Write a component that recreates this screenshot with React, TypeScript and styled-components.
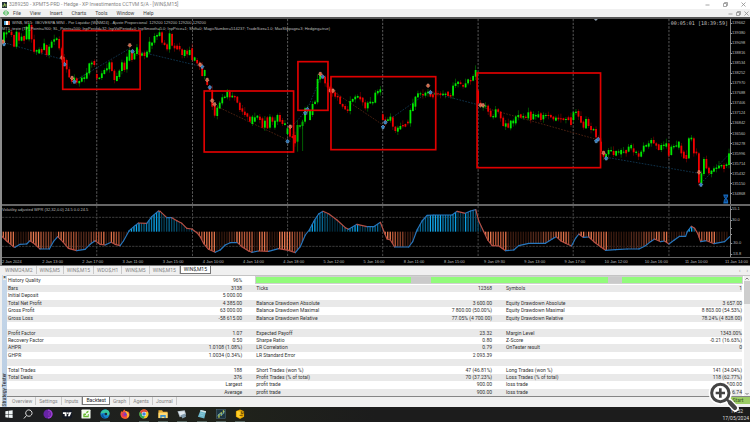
import React from "react";
import styled, { createGlobalStyle, css } from "styled-components";

const GlobalStyle = createGlobalStyle`
  * { box-sizing: border-box; }
  html, body, #root { height: 100%; }
  body { margin: 0; overflow: hidden; background: #f0f0f0; font: 5px/7px Roboto, "Open Sans", sans-serif; color: #333; }
  button { border: 0; margin: 0; padding: 0; background: none; font: inherit; color: inherit; white-space: nowrap; }
`;

const Page = styled.div`
  display: flex;
  flex-direction: column;
  height: 100vh;
  min-height: 400px;
  position: relative;
`;

const TitleBar = styled.header`
  display: flex;
  align-items: center;
  gap: 2px;
  height: 9px;
  padding: 0 4px 0 2px;
  background: #fff;
  color: #858585;
`;
const Title = styled.h1`
  flex: 1;
  margin: 0;
  font-size: 5px;
  font-weight: 400;
`;
const WindowButtons = styled.div<{ $gap: number }>`
  display: flex;
  align-items: center;
  gap: ${(p) => p.$gap}px;
  button { display: flex; width: 5px; height: 5px; }
  svg { width: 5px; height: 5px; }
`;
const MenuBar = styled.nav`
  display: flex;
  align-items: center;
  height: 8px;
  padding: 0 1px 0 3px;
  color: #444;
`;
const MenuItems = styled.div`
  display: flex;
  flex: 1;
  gap: 9px;
  padding-left: 4px;
`;

const ChartWindow = styled.main`
  display: flex;
  flex-direction: column;
  flex: 1;
  min-height: 0;
  border-top: 2px solid #565656;
  border-left: 2px solid #8c8c8c;
  border-bottom: 1px solid #777;
  background: #000;
  color: #bdbdbd;
  font: 4px/6px "Liberation Sans", Arial, sans-serif;
`;
const Pane = styled.section<{ $grow: number }>`
  display: flex;
  flex: ${(p) => p.$grow} 1 0;
  min-height: 0;
  position: relative;
`;
const Plot = styled.svg`
  flex: 1;
  min-width: 0;
  height: 100%;
  display: block;
`;
const Divider = styled.div`
  height: 2px;
  background: #666;
`;
const Scale = styled.div<{ $short?: boolean }>`
  display: flex;
  flex-direction: column;
  justify-content: space-between;
  width: 20px;
  border-left: 1px solid #888;
  padding: ${(p) => (p.$short ? "0" : "1px 0 7px")};
`;
const Price = styled.span`
  display: flex;
  align-items: center;
  &::before { content: ""; width: 1px; height: 1px; background: #999; }
`;
const ChartCaption = styled.div`
  position: absolute;
  top: 1px;
  left: 0;
  white-space: nowrap;
`;
const CaptionLine = styled.p<{ $indent?: boolean }>`
  display: flex;
  align-items: center;
  gap: 2px;
  margin: 0;
  padding-left: ${(p) => (p.$indent ? 2 : 0)}px;
`;
const Flag = styled.i`
  width: 6px;
  height: 4px;
  background: linear-gradient(90deg, #4fa8dc 0 33%, #fff 33% 66%, #e4683e 66%);
`;
const Countdown = styled.time`
  position: absolute;
  top: 1px;
  right: 22px;
  font: 5px/7px "DejaVu Sans Mono", monospace;
  color: #c4c4c4;
`;
const TimeAxis = styled.div`
  display: flex;
  height: 8px;
  padding-top: 1px;
  border-top: 1px solid #666;
`;
const TimeLabel = styled.span`
  flex: 1 1 0;
  min-width: 0;
  white-space: nowrap;
  &:last-child { flex: 0 0 25px; }
`;

const ChartTabs = styled.nav`
  display: flex;
  align-items: stretch;
  height: 9px;
  padding: 0 2px 1px;
  background: #f0f0f0;
  color: #858585;
`;
const activeTab = css`
  background: #fff;
  border: 1px solid #777;
  border-top: 0;
  color: #222;
`;
const ChartTab = styled.button<{ $active?: boolean }>`
  padding: 0 3px;
  line-height: 7px;
  border-right: 1px solid #c9c9c9;
  ${(p) => p.$active && activeTab}
`;
const Pager = styled.div`
  display: flex;
  gap: 6px;
  margin-left: auto;
`;

const Tester = styled.section`
  display: flex;
  height: 132px;
  padding-left: 2px;
`;
const SideStrip = styled.aside`
  display: flex;
  flex-direction: column;
  align-items: center;
  justify-content: space-between;
  width: 5px;
  background: linear-gradient(#c7d8ea, #b8cce2);
  button { line-height: 5px; font-weight: 700; background: #eee; }
`;
const SideTitle = styled.h2`
  margin: 0 0 1px;
  writing-mode: vertical-rl;
  rotate: 180deg;
  font-size: 5px;
  line-height: 5px;
  font-weight: 400;
  color: #222;
`;
const TesterBody = styled.div`
  display: flex;
  flex-direction: column;
  flex: 1;
  min-width: 0;
`;
const ReportArea = styled.div`
  display: flex;
  flex: 1;
  min-height: 0;
  border-top: 1px solid #c4c4c4;
  border-bottom: 1px solid #858585;
  background: #fff;
`;
const Report = styled.table`
  flex: 1;
  width: 100%;
  min-width: 0;
  height: 120px;
  border-collapse: collapse;
  table-layout: fixed;
  tr:nth-child(even) { background: #e9e9e9; }
  th, td { padding: 0; line-height: 5px; white-space: nowrap; }
  th { text-align: left; font-weight: 400; padding-left: 14px; }
  th:first-child { padding-left: 1px; }
  td { text-align: right; }
`;
const Column = styled.col<{ $share: number }>`
  width: ${(p) => p.$share}%;
`;
const QualityBar = styled.div`
  display: flex;
  height: 6px;
  margin-left: 14px;
  outline: 1px solid #d0d0d0;
`;
const Quality = styled.i<{ $share: number; $missing?: boolean }>`
  flex: ${(p) => p.$share} 1 0;
  background: ${(p) => (p.$missing ? "#cacaca" : "#92fb7b")};
`;
const Scroller = styled.div`
  display: flex;
  flex-direction: column;
  justify-content: space-between;
  align-items: center;
  flex: 0 0 6px;
  margin-left: 2px;
  background: #f0f0f0;
  svg { width: 4px; height: 5px; }
`;
const Thumb = styled.div`
  width: 100%;
  height: 23px;
  margin-bottom: auto;
  background: #cdcdcd;
`;
const TesterTabs = styled.nav`
  display: flex;
  height: 10px;
  padding-left: 2px;
  color: #858585;
`;
const TesterTab = styled.button<{ $active?: boolean }>`
  height: 8px;
  padding: 0 3px;
  line-height: 7px;
  border-right: 1px solid #c9c9c9;
  ${(p) => p.$active && activeTab}
`;
const StartButton = styled.button`
  width: 24px;
  height: 7px;
  margin-left: auto;
  line-height: 7px;
  background: #9ccc65;
  color: #35521b;
`;

const Taskbar = styled.footer`
  display: flex;
  align-items: center;
  justify-content: space-between;
  height: 15px;
  padding: 0 1px 0 4px;
  background: linear-gradient(90deg, #1d1e21, #20231b 30%, #1c1c1c 50%);
  color: #ddd;
`;
const TaskList = styled.div`
  display: flex;
  justify-content: space-between;
  width: 241px;
`;
const TaskButton = styled.button<{ $open?: boolean }>`
  display: flex;
  flex: 0 0 10px;
  height: 15px;
  align-items: center;
  border-bottom: 1px solid ${(p) => (p.$open ? "#55645f" : "transparent")};
  svg { width: 10px; height: 10px; }
`;
const Clock = styled.time`
  text-align: right;
  span { display: block; }
  span:first-child { padding-right: 6px; }
`;
const Magnifier = styled.button`
  position: absolute;
  right: 10px;
  bottom: 9px;
  width: 32px;
  height: 32px;
  svg { display: block; width: 32px; height: 32px; }
`;

const STEP = 7.53;
const RIGHT = 2188;

/* Candles, oldest first: body top, body bottom, and direction. */
const CANDLES = `
97-132g 97-103g 92-97g 95-105r 105-140r 95-140g 97-122r 110-122g 108-122r 80-118g 73-118g 75-118r 118-155r 150-155g 148-160g
147-158r 130-150g 135-165r 140-165g 125-143g 118-125g 115-120g 117-145r 145-178r 172-190r 180-208r 208-232r 235-245r 233-243g 235-248r
243-250g 233-245g 232-237g 218-236g 190-220g 188-193g 183-195r
222-235r 233-237g 220-234g 210-222g 205-211g 187-208g 187-213r 212-240r 228-243g 212-231g 187-213g 188-210r 170-208g 150-182g
152-180r 160-178g 142-162g 148-165r 160-167g 158-168r 155-172g 125-157g 128-137g 108-128g 105-110g 97-108g 97-128r 128-135r 133-148r
100-148g 102-137r 137-145r 137-148r 138-148r 148-165r 150-168g 152-163r 150-165g
145-180r 172-182g 180-190r 188-200r 200-228r 210-228g 240-255r 262-270r 270-320r 318-347r 323-348g 308-325g 292-310g 290-294g
275-292g 275-292r 287-292g 288-292r 290-308r 308-330r 325-335r 335-345r 340-350r 350-365r 350-372g 352-365g 347-353g 350-360r
355-383r 362-383g 352-385r 350-383g 352-365r 362-383g 345-365g 345-365r 360-372r 370-375g
385-402g 380-410r 408-414r 405-430r 375-425g 376-380g 365-378g 325-365g 330-334g 330-360g 312-345g 305-312g 237-307g 225-238g
228-234r 230-250r 248-262r 260-275r 270-280r 277-290r 288-292r 290-312r 312-320r 318-328r 328-333r 303-333g 297-305g 290-298g
288-293g 290-298r 293-307r 307-325r 308-325g 305-310g 306-310g 278-308g 273-280g 268-277g
343-360r 358-368r 358-363g 350-362g 352-380r 380-393r 383-395g 378-388g 375-379r 372-380r 365-370r 330-370g 310-333g 290-320g
280-292g 280-283g 282-286r 278-287g 275-280g 275-290r 283-292r 278-285g 280-283r 280-285r 281-285g 281-285g 275-288r 285-290r
257-287g 250-258g 245-252g 247-252r 255-260r 250-262g 238-250g 240-244r 228-242g 210-230g
272-310r 308-315r 315-322g 317-320g 317-335r 332-350r 348-352g 328-352g 328-335r 335-355r 353-378r 370-380g 370-383r 362-385g
362-370g 350-370g 345-351g 343-353r 348-353g 350-354r 337-355g 335-360r 342-358g 345-349g 343-352g 340-360r 345-358g 345-348g
345-348r 345-352r 350-358r 353-362g 353-358r 355-358r 355-360r 357-360g 352-360r 352-375r
337-360g 335-339g 333-350r 348-368r 365-383r 357-385g 357-378r 378-390r 387-391g 387-412r 412-420r 425-455r 455-470r 462-475g
450-463g 450-454g 453-465r 453-467g 454-458g 450-463g 455-458g 450-460r 440-455g 435-445g 445-457r 455-459g 460-470r 455-470g
437-455g 435-440g 430-440g 420-430g 420-430r 430-437r 433-450r 435-450g 434-438g 430-440g
430-467r 440-465g 438-442g 436-440g 425-443g 437-460r 455-475r 465-477r 415-475g 413-418g 415-460r 455-460r 460-548r 520-550g
477-522g 477-505r 503-520r 512-522g 505-515g 503-507g 497-505g 495-499g 495-507r 493-498g 460-495g
`
  .trim()
  .split(/\s+/)
  .map((text, i, all) => {
    const [top, rest] = text.split("-");
    const bottom = parseInt(rest, 10);
    return {
      x: 12 + (i * (2185 - 12)) / (all.length - 1),
      top: Number(top),
      bottom,
      up: rest.endsWith("g"),
      reach: [4, 10, 6, 2, 14, 5, 8][(i * 5 + (i % 3)) % 7],
      drop: [6, 3, 10, 4, 2, 8][(i * 7 + (i % 4)) % 6],
    };
  });

const DAY_LINES = [290, 577, 862, 1147, 1433, 1718, 2005];
const MARKED = [
  [188, 92, 232, 176],
  [612, 273, 268, 183],
  [893, 185, 90, 146],
  [992, 230, 314, 219],
  [1430, 219, 370, 284],
];
const SELLS = [[9, 125], [186, 173], [216, 234], [389, 136], [600, 194], [621, 240], [636, 302], [643, 313], [870, 380], [960, 222], [990, 272], [998, 272], [1283, 257], [1440, 316], [1448, 316], [1809, 459], [2095, 517]];
const BUYS = [[12, 132], [193, 193], [223, 245], [397, 154], [606, 200], [629, 262], [862, 424], [915, 339], [921, 328], [967, 230], [1148, 381], [1155, 367], [1290, 277], [1787, 423], [1793, 418], [1817, 475], [2101, 554]];
const TRADES: [string, string][] = [
  ["M12 128 193 180", "#174b70"],
  ["M223 243 389 145", "#174b70"],
  ["M397 150 606 200", "#174b70"],
  ["M643 316 862 420", "#703018"],
  ["M870 385 921 328 960 235", "#174b70"],
  ["M998 274 1148 375", "#703018"],
  ["M1155 367 1283 277", "#174b70"],
  ["M1290 277 1440 316", "#174b70"],
  ["M1448 322 1788 418", "#703018"],
  ["M1817 472 2095 520", "#174b70"],
  ["M2101 550 2188 460", "#174b70"],
];

const ZERO = 290;
const WAVE: number[][] = [
  [5, 303], [20, 318], [40, 335], [45, 337], [60, 328], [80, 327], [90, 317], [105, 328], [120, 342], [148, 342], [160, 320], [173, 305],
  [190, 322], [205, 340], [230, 347], [255, 343], [270, 328], [285, 317], [300, 328], [315, 330], [333, 322], [345, 328], [360, 332],
  [370, 318], [387, 287], [405, 272], [415, 264], [440, 265], [455, 245], [475, 228], [480, 229], [500, 248], [515, 248], [530, 257],
  [545, 265], [560, 280], [575, 282], [590, 293], [600, 305], [610, 325], [625, 343], [645, 352], [660, 345], [675, 330], [690, 323],
  [712, 323], [725, 335], [745, 348], [755, 352], [775, 348], [805, 349], [835, 341], [865, 346], [885, 353], [900, 335], [915, 300],
  [927, 285], [940, 260], [955, 237], [968, 229], [985, 236], [1010, 255], [1035, 278], [1045, 283], [1070, 268], [1100, 275], [1120, 275],
  [1140, 262], [1150, 288], [1160, 312], [1170, 315], [1183, 336], [1225, 336], [1237, 320], [1250, 285], [1265, 258], [1280, 241],
  [1300, 240], [1355, 240], [1370, 229], [1395, 235], [1410, 228], [1426, 224], [1435, 258], [1450, 290], [1462, 315], [1475, 332],
  [1495, 333], [1505, 340], [1515, 347], [1540, 345], [1555, 332], [1585, 325], [1635, 325], [1655, 312], [1667, 305], [1680, 317],
  [1695, 325], [1713, 333], [1725, 310], [1735, 297], [1748, 307], [1765, 306], [1780, 320], [1800, 335], [1815, 346], [1845, 344],
  [1880, 342], [1915, 342], [1935, 332], [1950, 320], [1962, 312], [1980, 320], [1992, 318], [2005, 327], [2020, 316], [2037, 304],
  [2055, 304], [2060, 290], [2072, 274], [2082, 280], [2092, 297], [2100, 320], [2118, 317], [2140, 326], [2172, 320], [2187, 305],
];
const waveAt = (x: number) => {
  const i = Math.max(1, WAVE.findIndex((p) => p[0] >= x));
  const [x0, y0] = WAVE[i - 1];
  const [x1, y1] = WAVE[i];
  return y0 + ((y1 - y0) * (x - x0)) / (x1 - x0);
};
const BARS = Array.from({ length: 289 }, (_, i) => {
  const x = 10 + i * STEP;
  const y = waveAt(x);
  const falling = waveAt(Math.min(x + 4, 2186)) > waveAt(Math.max(x - 4, 6));
  const positive = y < ZERO;
  const strong = positive ? !falling : falling;
  const shade = (i * 7 + (i % 5)) % 4;
  const blue = strong ? ["#0aa0e4", "#087cb2", "#12acf0", "#06648f"] : ["#053c54", "#075b7c", "#03293a", "#064b68"];
  const orange = strong ? ["#df7048", "#b95838", "#ee7b51", "#a04d30"] : ["#3c1c11", "#8a432b", "#54291b", "#32170d"];
  return { x, y, fill: (positive ? blue : orange)[shade] };
});

const PRICES = Array.from({ length: 18 }, (_, i) => 139662 - i * 282);
const TIMES = ["2 Jan 2024", "2 Jan 13:00", "2 Jan 17:00", "3 Jan 11:00", "3 Jan 15:00", "4 Jan 10:00", "4 Jan 14:00", "4 Jan 18:00", "5 Jan 12:00", "5 Jan 16:00", "8 Jan 11:00", "8 Jan 15:00", "9 Jan 09:30", "9 Jan 13:00", "9 Jan 17:00", "10 Jan 12:00", "10 Jan 16:00", "11 Jan 10:00", "11 Jan 14:00"];

const ROWS = [
  ["Bars", "3138", "Ticks", "12368", "Symbols", "1"],
  ["Initial Deposit", "5 000.00", "", "", "", ""],
  ["Total Net Profit", "4 385.00", "Balance Drawdown Absolute", "3 600.00", "Equity Drawdown Absolute", "3 657.00"],
  ["Gross Profit", "63 000.00", "Balance Drawdown Maximal", "7 800.00 (50.00%)", "Equity Drawdown Maximal", "8 803.00 (54.53%)"],
  ["Gross Loss", "-58 615.00", "Balance Drawdown Relative", "77.05% (4 700.00)", "Equity Drawdown Relative", "78.24% (4 828.00)"],
  ["", "", "", "", "", ""],
  ["Profit Factor", "1.07", "Expected Payoff", "23.32", "Margin Level", "1343.00%"],
  ["Recovery Factor", "0.50", "Sharpe Ratio", "0.80", "Z-Score", "-0.21 (16.63%)"],
  ["AHPR", "1.0108 (1.08%)", "LR Correlation", "0.79", "OnTester result", "0"],
  ["GHPR", "1.0034 (0.34%)", "LR Standard Error", "2 093.39", "", ""],
  ["", "", "", "", "", ""],
  ["Total Trades", "188", "Short Trades (won %)", "47 (46.81%)", "Long Trades (won %)", "141 (34.04%)"],
  ["Total Deals", "376", "Profit Trades (% of total)", "70 (37.23%)", "Loss Trades (% of total)", "118 (62.77%)"],
  ["", "Largest", "profit trade", "900.00", "loss trade", "-500.00"],
  ["", "Average", "profit trade", "900.00", "loss trade", "-496.74"],
];

function PriceChart() {
  return (
    <Plot viewBox="6 57 2182 555" preserveAspectRatio="none" role="img" aria-label="WIN$ candlestick chart">
      {DAY_LINES.map((x) => (
        <path key={x} d={`M${x} 57V612`} stroke="#585858" strokeWidth="3" strokeDasharray="7 4" />
      ))}
      {TRADES.map(([d, stroke]) => (
        <path key={d} d={d} fill="none" stroke={stroke} strokeWidth="2" strokeDasharray="5 4" />
      ))}
      {CANDLES.map((c) => (
        <g key={c.x} fill={c.up ? "#00e800" : "#f00000"}>
          <rect x={c.x - 1} y={c.top - c.reach} width="2" height={c.bottom - c.top + c.reach + c.drop} opacity="0.5" />
          <rect x={c.x - 2.7} y={c.top} width="5.4" height={c.bottom - c.top} />
        </g>
      ))}
      <path d="M892 375V455M907 360V453" stroke="#008d00" strokeWidth="2" />
      {BUYS.map(([x, y]) => (
        <path key={`${x}`} d={`M${x} ${y - 6}l6 6h-3v5h-6v-5h-3z`} fill="#2878bd" stroke="#7eb0dc" strokeWidth="1.5" />
      ))}
      {SELLS.map(([x, y]) => (
        <path key={`${x}`} d={`M${x} ${y + 6}l6-6h-3v-5h-6v5h-3z`} fill="#d5603e" stroke="#e6a18b" strokeWidth="1.5" />
      ))}
      {MARKED.map(([x, y, width, height]) => (
        <rect key={x} x={x} y={y} width={width} height={height} fill="none" stroke="#e00000" strokeWidth="5" />
      ))}
      <path d="M1780 57h12l-6 6z" fill="#8f9dab" />
      <path d="M2168 585h14M2168 609h14M2170 586q0 7 5 10q-5 3-5 11h11q0-8-5-11q5-3 5-10z" fill="#0c3d7c" stroke="#176cc0" strokeWidth="3" />
    </Plot>
  );
}

function OscillatorChart() {
  return (
    <Plot viewBox="6 213 2182 153" preserveAspectRatio="none" role="img" aria-label="Volatility adjusted WPR">
      {DAY_LINES.map((x) => (
        <path key={x} d={`M${x} 213V366`} stroke="#484848" strokeWidth="3" strokeDasharray="7 4" />
      ))}
      <path d={`M6 247H${RIGHT}M6 334H${RIGHT}`} stroke="#484848" strokeWidth="2.5" strokeDasharray="7 3" />
      {BARS.map((b) => (
        <rect key={b.x} x={b.x - 2} y={Math.min(b.y, ZERO)} width="4" height={Math.abs(b.y - ZERO)} fill={b.fill} />
      ))}
      {WAVE.slice(1).map(([x, y], i) => (
        <path key={x} d={`M${WAVE[i][0]} ${WAVE[i][1]}L${x} ${y}`} stroke={y > WAVE[i][1] ? "#b75045" : "#2676bd"} strokeWidth="3.5" strokeLinecap="round" />
      ))}
    </Plot>
  );
}

const TASKS: { name: string; open?: boolean; art: React.ReactNode }[] = [
  { name: "Start", art: <path d="M3 5l7-1v7H3zm8-1 8-1v8h-8zM3 12h7v7l-7-1zm8 0h8v8l-8-1z" fill="#eef3f5" /> },
  { name: "Search", art: <path d="M8 14 2 21M8 14A7 7 0 1 1 13 16Q10 16 8 14Z" fill="none" stroke="#eee" strokeWidth="2" /> },
  { name: "Tor Browser", art: <><circle cx="11" cy="11" r="10" fill="#6723a5" /><path d="M11 1a10 10 0 0 1 0 20z" fill="#9b3ed0" /><path d="M11 5a6 6 0 0 1 0 12M11 8a3 3 0 0 1 0 6" fill="none" stroke="#4a167d" strokeWidth="1.5" /></> },
  { name: "TradingView", art: <><rect x="0" y="1" width="22" height="20" rx="4" fill="#141925" /><path d="M2 7h8v9H6v-5H2zM16 7h5l-4 9h-4z" fill="#fff" /><circle cx="13" cy="9" r="2" fill="#fff" /></> },
  { name: "Broker", art: <><rect x="1" y="1" width="20" height="20" rx="2" fill="#f4faef" /><path d="M6 10h5v3H8v2h7v-4h2v7H5v-6zM11 8q1-4 6-4 0 5-5 6z" fill="#67ba32" /></> },
  { name: "Edge", open: true, art: <><circle cx="11" cy="11" r="10" fill="#1682cf" /><path d="M1 10Q4 1 13 1q8 1 8 9 0 5-7 4 2-4-3-5Q5 8 1 10z" fill="#36c6a2" /><path d="M7 11q0 8 8 9-8 3-12-4-1-5 4-5z" fill="#0b559e" /><circle cx="13" cy="11" r="3" fill="#1b2c39" /></> },
  { name: "Firefox", art: <><path d="M3 5q1 1 3 1 1-4 5-5v3q5 1 6 4V4q5 5 4 10-2 8-10 8-9-1-10-10 0-4 2-7z" fill="#f65a2b" /><path d="M12 4q6 1 8 8 0 6-5 8 3-7-2-10z" fill="#ffbd35" /><circle cx="10" cy="12" r="5" fill="#7042c5" /><path d="M3 11q5-4 9-1-5 0-4 4 3 2 6 0-2 5-8 3z" fill="#e83264" /></> },
  { name: "Chrome", open: true, art: <><circle cx="11" cy="11" r="10" fill="#f3c928" /><path d="M2 6a10 10 0 0 1 18 0l-9 1-4 7z" fill="#dd4b3d" /><path d="M2 6a10 10 0 0 0 8 15l4-8-7-1z" fill="#2ea65b" /><circle cx="11" cy="11" r="5" fill="#fff" /><circle cx="11" cy="11" r="4" fill="#3d82dc" /></> },
  { name: "File Explorer", open: true, art: <><path d="M1 3h8l2 3h10v14H1z" fill="#e9ae35" /><path d="M1 8h20v12H1z" fill="#ffda73" /><path d="M5 13h12v7h-3v-3H8v3H5z" fill="#398fcc" /></> },
  { name: "Calculator", open: true, art: <><path d="M1 5 17 3l3 9-14 6z" fill="#aeb9c1" /><path d="m3 6 13-1 2 6-11 4z" fill="#dfe9ef" /><path d="m8 14 10-4 2 7-8 4z" fill="#829cad" /></> },
  { name: "Notepad", open: true, art: <><path d="m8 2 12 3-4 16-14-4z" fill="#6bb6ca" /><path d="m8 2 12 3-1 3-12-3z" fill="#d6e4e5" /><path d="m7 9 8 2m-9 2 8 2" stroke="#a9e0e8" /></> },
  { name: "MetaTrader", open: true, art: <><rect x="1" y="1" width="20" height="20" fill="#1d3542" stroke="#587384" /><path d="M5 19v-8h3v8M10 15V7h3v8M15 10V3h3v7" fill="#bacb51" /><path d="m3 16 6-7 4 4 6-8" fill="none" stroke="#61a0bc" strokeWidth="2" /></> },
  { name: "MetaEditor", open: true, art: <><path d="m11 1 9 4v12l-9 5-9-5V5z" fill="#e5a600" /><path d="m4 4 8 2v14l-8-3z" fill="#ffd02b" /><path d="M14 5v5h4V5m-8 9h7" fill="none" stroke="#6b4d08" strokeWidth="2" /></> },
];

function WindowControls({ gap, label }: { gap: number; label: string }) {
  return (
    <WindowButtons $gap={gap}>
      {[
        ["Minimize", "M1 6h8"],
        ["Restore", "M1 3h6v6H1zM3 3V1h6v6H7"],
        ["Close", "M1 1l8 8M9 1 1 9"],
      ].map(([name, d]) => (
        <button key={name} aria-label={`${name} ${label}`}>
          <svg viewBox="0 0 10 10"><path d={d} fill="none" stroke="#888" strokeWidth="1.5" /></svg>
        </button>
      ))}
    </WindowButtons>
  );
}

export default function App() {
  return (
    <Page>
      <GlobalStyle />
      <TitleBar>
        <svg width="5" height="6" viewBox="0 0 15 18" aria-hidden="true">
          <path d="M0 0h15v18H0z" fill="#25333a" />
          <path d="M2 15V8h3v7M6 11V4h3v7M10 14V6h3v8" fill="#9fc35f" />
        </svg>
        <Title>3289250 - XPMT5-PRD - Hedge - XP Investimentos CCTVM S/A - [WIN$,M15]</Title>
        <WindowControls gap={13} label="window" />
      </TitleBar>
      <MenuBar>
        <svg width="6" height="6" viewBox="0 0 18 18" aria-hidden="true">
          <path d="M4 2v13M9 0v18M14 3v12M1 6v6M17 6v6" stroke="#43b956" strokeWidth="2.5" />
        </svg>
        <MenuItems>
          {["File", "View", "Insert", "Charts", "Tools", "Window", "Help"].map((item) => <button key={item}>{item}</button>)}
        </MenuItems>
        <WindowControls gap={3} label="chart" />
      </MenuBar>

      <ChartWindow>
        <Pane $grow={185}>
          <PriceChart />
          <Scale>{PRICES.map((p) => <Price key={p}>{p}</Price>)}</Scale>
          <ChartCaption>
            <CaptionLine $indent><Flag />WIN$, M15:&nbsp; IBOVESPA MINI - Por Liquidar (WINM24) - Ajuste Proporcional&nbsp; 129200 129200 129200 129200</CaptionLine>
            <CaptionLine>MT5_teste (TP_Points=900; SL_Points=500; InpPeriod=32; InpVolPeriod=0; InpSmooth=5.0; InpPrice=1; Shift=0; MagicNumber=514237; TradeSize=1.0; MaxSlippage=3; Hedging=true)</CaptionLine>
          </ChartCaption>
          <Countdown>00:05:01 [18:39:59]</Countdown>
        </Pane>
        <Divider />
        <Pane $grow={51}>
          <OscillatorChart />
          <Scale $short>
            <Price>55.1</Price><Price>30.0</Price><Price aria-hidden="true" /><Price aria-hidden="true" /><Price>-30.0</Price><Price>-53.8</Price>
          </Scale>
          <ChartCaption>Volatility adjusted WPR (32,32,0.0) 24.5 0.0 24.5</ChartCaption>
        </Pane>
        <TimeAxis>{TIMES.map((t) => <TimeLabel key={t}>{t}</TimeLabel>)}</TimeAxis>
      </ChartWindow>

      <ChartTabs>
        {["WINM24,M2", "WIN$,M5", "WIN$,M15", "WDO$,H1", "WIN$,M5", "WIN$,M15", "WIN$,M15"].map((name, i) => (
          <ChartTab key={i} $active={i === 6}>{name}</ChartTab>
        ))}
        <Pager><button aria-label="Previous charts">‹</button><button aria-label="Next charts">›</button></Pager>
      </ChartTabs>

      <Tester>
        <SideStrip><button aria-label="Close tester">×</button><SideTitle>Strategy Tester</SideTitle></SideStrip>
        <TesterBody>
          <ReportArea>
            <Report>
              <colgroup>
                {[16, 16, 17, 17, 17, 17].map((share, i) => <Column key={i} $share={share} />)}
              </colgroup>
              <tbody>
                <tr>
                  <th scope="row">History Quality</th>
                  <td>96%</td>
                  <td colSpan={4}>
                    <QualityBar>
                      <Quality $share={155} /><Quality $share={20} $missing /><Quality $share={176} /><Quality $share={14} $missing /><Quality $share={120} />
                    </QualityBar>
                  </td>
                </tr>
                {ROWS.map((row, i) => (
                  <tr key={i}>
                    {row.map((cell, c) => (c % 2 ? <td key={c}>{cell || "\u00a0"}</td> : <th key={c} scope="row">{cell || "\u00a0"}</th>))}
                  </tr>
                ))}
              </tbody>
            </Report>
            <Scroller>
              <svg viewBox="0 0 8 10"><path d="m1 7 3-3 3 3" fill="none" stroke="#555" strokeWidth="1.5" /></svg>
              <Thumb />
              <svg viewBox="0 0 8 10"><path d="m1 4 3 3 3-3" fill="none" stroke="#555" strokeWidth="1.5" /></svg>
            </Scroller>
          </ReportArea>
          <TesterTabs>
            {["Overview", "Settings", "Inputs", "Backtest", "Graph", "Agents", "Journal"].map((name) => (
              <TesterTab key={name} $active={name === "Backtest"}>{name}</TesterTab>
            ))}
            <StartButton>Start</StartButton>
          </TesterTabs>
        </TesterBody>
      </Tester>

      <Taskbar>
        <TaskList>
          {TASKS.map((task) => (
            <TaskButton key={task.name} $open={task.open} aria-label={task.name}>
              <svg viewBox="0 0 22 22">{task.art}</svg>
            </TaskButton>
          ))}
        </TaskList>
        <Clock><span>17:52</span><span>17/05/2024</span></Clock>
      </Taskbar>

      <Magnifier aria-label="Enlarge">
        <svg viewBox="0 0 96 96">
          <path d="m62 61 20 21" stroke="#fff" strokeWidth="21" strokeLinecap="round" />
          <circle cx="37" cy="36" r="27" fill="#fff" stroke="#fff" strokeWidth="16" />
          <circle cx="37" cy="36" r="26" fill="#fff" stroke="#444" strokeWidth="9" />
          <path d="m57 56 6 6" stroke="#444" strokeWidth="8" />
          <path d="m66 65 15 16" stroke="#444" strokeWidth="13" strokeLinecap="round" />
          <path d="M37 22v28M23 36h28" stroke="#444" strokeWidth="8" />
        </svg>
      </Magnifier>
    </Page>
  );
}
